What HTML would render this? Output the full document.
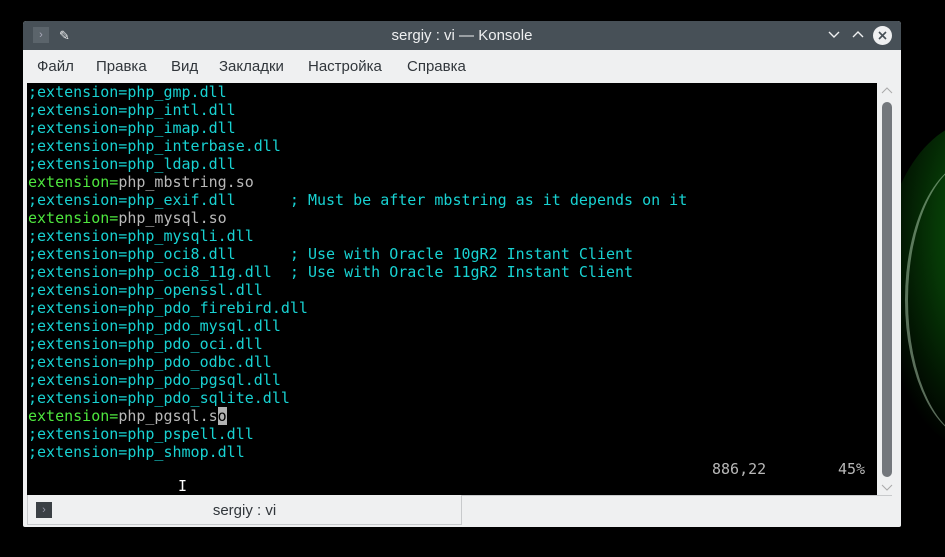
<!DOCTYPE html>
<html><head><meta charset="utf-8"><style>
*{margin:0;padding:0;box-sizing:border-box}
html,body{width:945px;height:557px}
body{overflow:hidden;background:#000;position:relative;font-family:"Liberation Sans","DejaVu Sans",sans-serif}
.bg{position:absolute;left:880px;top:120px;width:200px;height:330px;border-radius:50%;background:radial-gradient(ellipse at 55% 35%,#0b5e0b 0%,#063806 35%,#021402 60%,#000 75%)}
.swoosh{position:absolute;left:905px;top:160px;width:140px;height:280px;border-radius:50%;border-left:3px solid rgba(200,230,200,.45)}
.win{position:absolute;left:23px;top:21px;width:878px;height:506px;background:#eff0f1;border-radius:3px 3px 2px 2px;overflow:hidden}
.title{position:absolute;left:0;top:0;width:878px;height:29px;background:#475057;color:#eff0f1;font-size:15px;text-align:center;line-height:29px}
.menu{position:absolute;left:0;top:29px;height:33px;font-size:15px;color:#31363b;line-height:33px}
.menu span{position:absolute;white-space:nowrap}
.term{position:absolute;left:4px;top:62px;width:850px;height:412px;background:#000;font-family:"DejaVu Sans Mono","Liberation Mono",monospace;font-size:15px;line-height:18px;padding-top:0;padding-left:1px;white-space:pre;color:#18d2d2}
.g{color:#4ee63e}.w{color:#b8b8b8}
.cur{background:#b2b2b2;color:#000}
.sb{position:absolute;left:859px;top:81px;width:10px;height:375px;background:#73777c;border-radius:5px}
.tab{position:absolute;left:4px;top:474px;width:435px;height:30px;border:1px solid #c8cacc;border-top:none;background:#eff0f1;font-size:15px;color:#31363b;text-align:center;line-height:31px}
.tabline{position:absolute;left:439px;top:474px;width:430px;height:1px;background:#c8cacc}
</style></head><body>
<div class="bg"></div><div class="swoosh"></div>
<div class="win">
 <div class="title">sergiy : vi — Konsole
  <div style="position:absolute;left:10px;top:6px;width:16px;height:16px;background:#5b646b;color:#aab;font-size:11px;line-height:16px">›</div>
  <div style="position:absolute;left:36px;top:0;font-size:13px">✎</div>
  <svg style="position:absolute;left:805px;top:9px" width="12" height="10"><path d="M1 2 L6 7 L11 2" stroke="#eff0f1" fill="none" stroke-width="1.4"/></svg>
  <svg style="position:absolute;left:829px;top:9px" width="12" height="10"><path d="M1 7 L6 2 L11 7" stroke="#eff0f1" fill="none" stroke-width="1.4"/></svg>
  <div style="position:absolute;left:850px;top:5px;width:19px;height:19px;border-radius:50%;background:#eff0f1"></div>
  <svg style="position:absolute;left:850px;top:5px" width="19" height="19"><path d="M6 6 L13 13 M13 6 L6 13" stroke="#475057" stroke-width="1.6"/></svg>
 </div>
 <div class="menu"><span style="left:14px">Файл</span><span style="left:73px">Правка</span><span style="left:148px">Вид</span><span style="left:196px">Закладки</span><span style="left:285px">Настройка</span><span style="left:384px">Справка</span></div>
 <div class="term">;extension=php_gmp.dll
;extension=php_intl.dll
;extension=php_imap.dll
;extension=php_interbase.dll
;extension=php_ldap.dll
<span class="g">extension=</span><span class="w">php_mbstring.so</span>
;extension=php_exif.dll      ; Must be after mbstring as it depends on it
<span class="g">extension=</span><span class="w">php_mysql.so</span>
;extension=php_mysqli.dll
;extension=php_oci8.dll      ; Use with Oracle 10gR2 Instant Client
;extension=php_oci8_11g.dll  ; Use with Oracle 11gR2 Instant Client
;extension=php_openssl.dll
;extension=php_pdo_firebird.dll
;extension=php_pdo_mysql.dll
;extension=php_pdo_oci.dll
;extension=php_pdo_odbc.dll
;extension=php_pdo_pgsql.dll
;extension=php_pdo_sqlite.dll
<span class="g">extension=</span><span class="w">php_pgsql.s</span><span class="cur">o</span>
;extension=php_pspell.dll
;extension=php_shmop.dll</div>
 <div style="position:absolute;left:689px;top:439px;font-family:'DejaVu Sans Mono',monospace;font-size:15px;line-height:18px;color:#b8b8b8">886,22</div>
 <div style="position:absolute;left:815px;top:439px;font-family:'DejaVu Sans Mono',monospace;font-size:15px;line-height:18px;color:#b8b8b8">45%</div>
 <svg style="position:absolute;left:858px;top:66px" width="12" height="8"><path d="M1 6 L6 1 L11 6" stroke="#aaa" fill="none"/></svg>
 <div class="sb"></div>
 <svg style="position:absolute;left:858px;top:462px" width="12" height="8"><path d="M1 2 L6 7 L11 2" stroke="#aaa" fill="none"/></svg>
 <div class="tabline"></div>
 <div class="tab">sergiy : vi
  <div style="position:absolute;left:8px;top:7px;width:16px;height:16px;background:#3b4045;color:#99a;font-size:11px;line-height:16px">›</div>
 </div>
</div>
<div style="position:absolute;left:178px;top:478px;width:8px;height:16px;color:#fff;font-size:15px;line-height:16px;font-family:'DejaVu Sans Mono'">I</div>
</body></html>
